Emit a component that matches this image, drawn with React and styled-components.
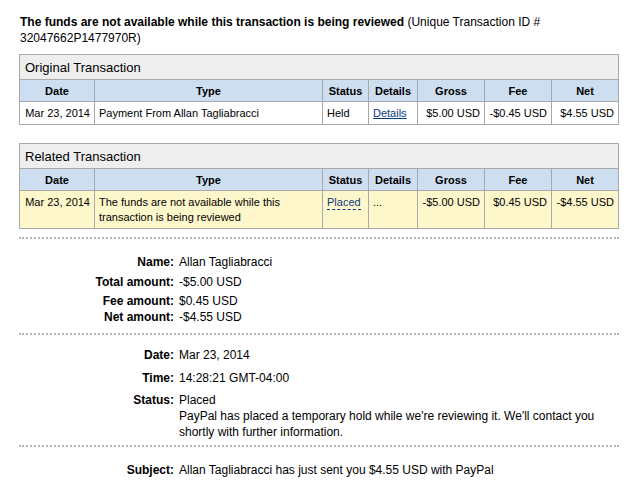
import React from 'react';
import styled, { createGlobalStyle } from 'styled-components';

const original = {
  date: 'Mar 23, 2014',
  type: 'Payment From Allan Tagliabracci',
  status: 'Held',
  gross: '$5.00 USD',
  fee: '-$0.45 USD',
  net: '$4.55 USD',
};

const related = {
  date: 'Mar 23, 2014',
  type: 'The funds are not available while this transaction is being reviewed',
  status: 'Placed',
  gross: '-$5.00 USD',
  fee: '$0.45 USD',
  net: '-$4.55 USD',
};

const columns = [
  { label: 'Date', width: 75 },
  { label: 'Type', width: 228 },
  { label: 'Status', width: 46 },
  { label: 'Details', width: 49 },
  { label: 'Gross', width: 67 },
  { label: 'Fee', width: 67 },
  { label: 'Net', width: 67 },
];

const TransactionTable = ({ title, row, highlight }) => (
  <Table>
    <colgroup>
      {columns.map((c) => (
        <col key={c.label} style={{ width: c.width }} />
      ))}
    </colgroup>
    <thead>
      <tr>
        <Caption colSpan={7}>{title}</Caption>
      </tr>
      <tr>
        {columns.map((c) => (
          <Th key={c.label}>{c.label}</Th>
        ))}
      </tr>
    </thead>
    <tbody>
      <Row $highlight={highlight}>
        <Td $align="right">{row.date}</Td>
        <Td>{row.type}</Td>
        <Td>
          {highlight ? <Dashed>{row.status}</Dashed> : row.status}
        </Td>
        <Td>{highlight ? '...' : <Link href="#">Details</Link>}</Td>
        <Td $align="right">{row.gross}</Td>
        <Td $align="right">{row.fee}</Td>
        <Td $align="right">{row.net}</Td>
      </Row>
    </tbody>
  </Table>
);

const App = () => {
  return (
    <>
      <GlobalStyle />
      <Page>
        <Heading>
          <strong>The funds are not available while this transaction is being reviewed</strong>{' '}
          (Unique Transaction ID # 32047662P1477970R)
        </Heading>

        <TransactionTable title="Original Transaction" row={original} />
        <Spacer />
        <TransactionTable title="Related Transaction" row={related} highlight />

        <Section $mt={8} $pt={15} $pb={8}>
          <DetailRow>
            <Label>Name:</Label>
            <Value>Allan Tagliabracci</Value>
          </DetailRow>
          <DetailRow $mt={4}>
            <Label>Total amount:</Label>
            <Value>-$5.00 USD</Value>
          </DetailRow>
          <DetailRow $mt={3}>
            <Label>Fee amount:</Label>
            <Value>$0.45 USD</Value>
          </DetailRow>
          <DetailRow>
            <Label>Net amount:</Label>
            <Value>-$4.55 USD</Value>
          </DetailRow>
        </Section>

        <Section $pt={12} $pb={5}>
          <DetailRow>
            <Label>Date:</Label>
            <Value>Mar 23, 2014</Value>
          </DetailRow>
          <DetailRow $mt={7}>
            <Label>Time:</Label>
            <Value>14:28:21 GMT-04:00</Value>
          </DetailRow>
          <DetailRow $mt={6}>
            <Label>Status:</Label>
            <Value>
              Placed
              <br />
              PayPal has placed a temporary hold while we're reviewing it. We'll contact you
              shortly with further information.
            </Value>
          </DetailRow>
        </Section>

        <Section $pt={15}>
          <DetailRow>
            <Label>Subject:</Label>
            <Value>Allan Tagliabracci has just sent you $4.55 USD with PayPal</Value>
          </DetailRow>
        </Section>
      </Page>
    </>
  );
};

export default App;

const GlobalStyle = createGlobalStyle`
  body {
    margin: 0;
    background: #fff;
    font-family: Arial, "Liberation Sans", sans-serif;
    color: #000;
  }
`;

const Page = styled.div`
  width: 600px;
  padding: 14px 0 0 19px;
`;

const Heading = styled.div`
  font-size: 12px;
  line-height: 16px;
  padding-left: 1px;
  margin-bottom: 8px;
`;

const Spacer = styled.div`
  height: 18px;
`;

const Table = styled.table`
  width: 600px;
  table-layout: fixed;
  border-collapse: collapse;
  border: 1px solid #a9a9a9;
  font-size: 11px;
`;

const Caption = styled.th`
  background: #eeeeee;
  border: 1px solid #a9a9a9;
  height: 24px;
  padding: 0 0 0 5px;
  text-align: left;
  font-size: 13px;
  font-weight: normal;
`;

const Th = styled.th`
  background: #cddef0;
  border: 1px solid #a9a9a9;
  height: 21px;
  padding: 0 4px;
  font-weight: bold;
  text-align: center;
`;

const Row = styled.tr`
  background: ${({ $highlight }) => ($highlight ? '#fff7cc' : '#ffffff')};
`;

const Td = styled.td`
  border: 1px solid #a9a9a9;
  padding: 4px 4px 3px;
  vertical-align: top;
  line-height: 15px;
  text-align: ${({ $align }) => $align || 'left'};
`;

const Link = styled.a`
  color: #0a3b80;
  text-decoration: underline;
`;

const Dashed = styled.span`
  color: #0a3b80;
  border-bottom: 1px dashed #0a3b80;
  padding-bottom: 1px;
`;

const Section = styled.div`
  border-top: 2px dotted #b3b3b3;
  margin-top: ${({ $mt }) => $mt || 0}px;
  padding-top: ${({ $pt }) => $pt}px;
  padding-bottom: ${({ $pb }) => $pb || 0}px;
`;

const DetailRow = styled.div`
  display: grid;
  grid-template-columns: 155px 1fr;
  column-gap: 5px;
  margin-top: ${({ $mt }) => $mt || 0}px;
  font-size: 12px;
  line-height: 16px;
`;

const Label = styled.div`
  text-align: right;
  font-weight: bold;
`;

const Value = styled.div`
  padding-right: 20px;
`;
